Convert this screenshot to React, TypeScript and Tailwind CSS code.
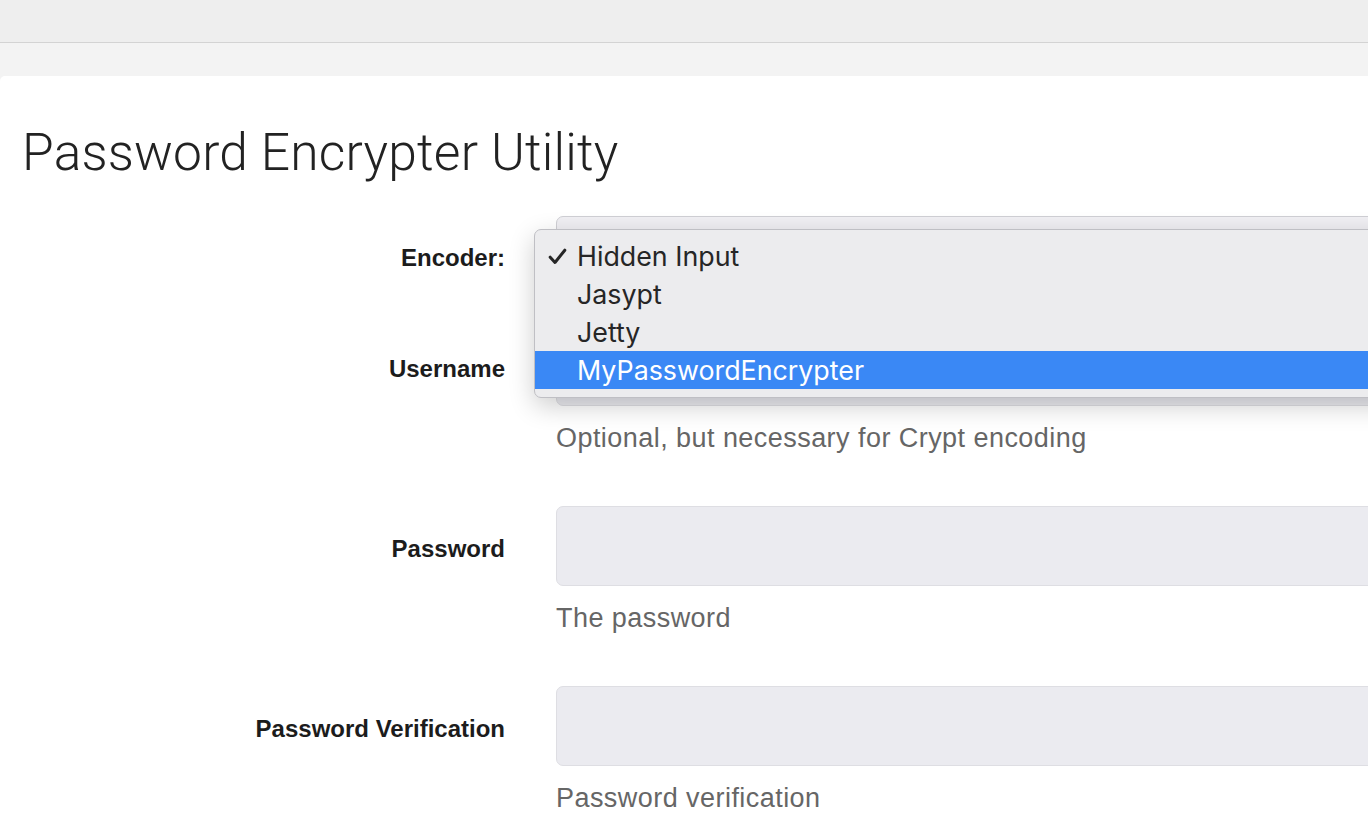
import React from "react";

interface FieldProps {
  label: string;
  help?: string;
}

function Field({ label, help }: FieldProps) {
  return (
    <div className="flex items-start">
      <div className="w-[505px] shrink-0 h-[80px] pt-[6px] flex items-center justify-end text-[24px] font-bold text-[#1c1c1c]">
        {label}
      </div>
      <div className="ml-[51px] shrink-0">
        <div className="w-[1000px] h-[80px] rounded-[7px] border border-[#dedee3] bg-[#ebebf0]" />
        {help && (
          <div className="mt-[16px] h-[32px] leading-[32px] text-[27px] tracking-[0.45px] text-[#666]">
            {help}
          </div>
        )}
      </div>
    </div>
  );
}

const options = ["Hidden Input", "Jasypt", "Jetty", "MyPasswordEncrypter"];

function EncoderRow() {
  return (
    <div className="flex items-start">
      <div className="w-[505px] shrink-0 h-[82px] pt-[2px] flex items-center justify-end text-[24px] font-bold text-[#1c1c1c]">
        Encoder:
      </div>
      <div className="ml-[51px] shrink-0 relative">
        <div className="w-[1000px] h-[82px] rounded-[7px] border border-[#cfcfd4] bg-[#f0eff3]" />
        {/* open select menu */}
        <div className="absolute left-[-22px] top-[13px] w-[1000px] rounded-[7px] border border-[#bfbfc4] bg-[#ececee] pt-[7px] pb-[8px] shadow-[0_8px_26px_rgba(0,0,0,0.2)] font-['Inter',sans-serif]">
          {options.map((opt, i) => (
            <div
              key={opt}
              className={
                i === 3
                  ? "h-[38px] flex items-center bg-[#3a88f5] text-white text-[26.8px]"
                  : "h-[38px] flex items-center text-[#262626] text-[26.8px]"
              }
            >
              <span className="w-[42px] flex justify-center pl-[3px]">
                {i === 0 && (
                  <svg width="19" height="17" viewBox="0 0 19 17" fill="none">
                    <path
                      d="M2.2 9.2l4.8 5.3L16.8 2.2"
                      stroke="#262626"
                      strokeWidth="3"
                      strokeLinecap="round"
                      strokeLinejoin="round"
                    />
                  </svg>
                )}
              </span>
              <span>{opt}</span>
            </div>
          ))}
        </div>
      </div>
    </div>
  );
}

export default function App() {
  return (
    <div className="w-[1368px] h-[816px] overflow-hidden bg-[#f3f3f3] font-['Liberation_Sans',Arial,sans-serif]">
      {/* browser chrome strips */}
      <div className="h-[43px] bg-[#eeeeee] border-b border-[#d3d3d3]" />
      <div className="h-[33px] bg-[#f3f3f3]" />

      {/* page */}
      <div className="bg-white rounded-tl-[5px] h-[740px]">
        <h1 className="pl-[22px] pt-[45px] text-[51.5px] leading-[64px] font-light text-[#222] font-['Roboto',sans-serif] tracking-[0.2px]">
          Password Encrypter Utility
        </h1>

        <div className="mt-[31px]">
          <EncoderRow />
          <div className="mt-[28px]">
            <Field label="Username" help="Optional, but necessary for Crypt encoding" />
          </div>
          <div className="mt-[52px]">
            <Field label="Password" help="The password" />
          </div>
          <div className="mt-[52px]">
            <Field label="Password Verification" help="Password verification" />
          </div>
        </div>
      </div>
    </div>
  );
}
